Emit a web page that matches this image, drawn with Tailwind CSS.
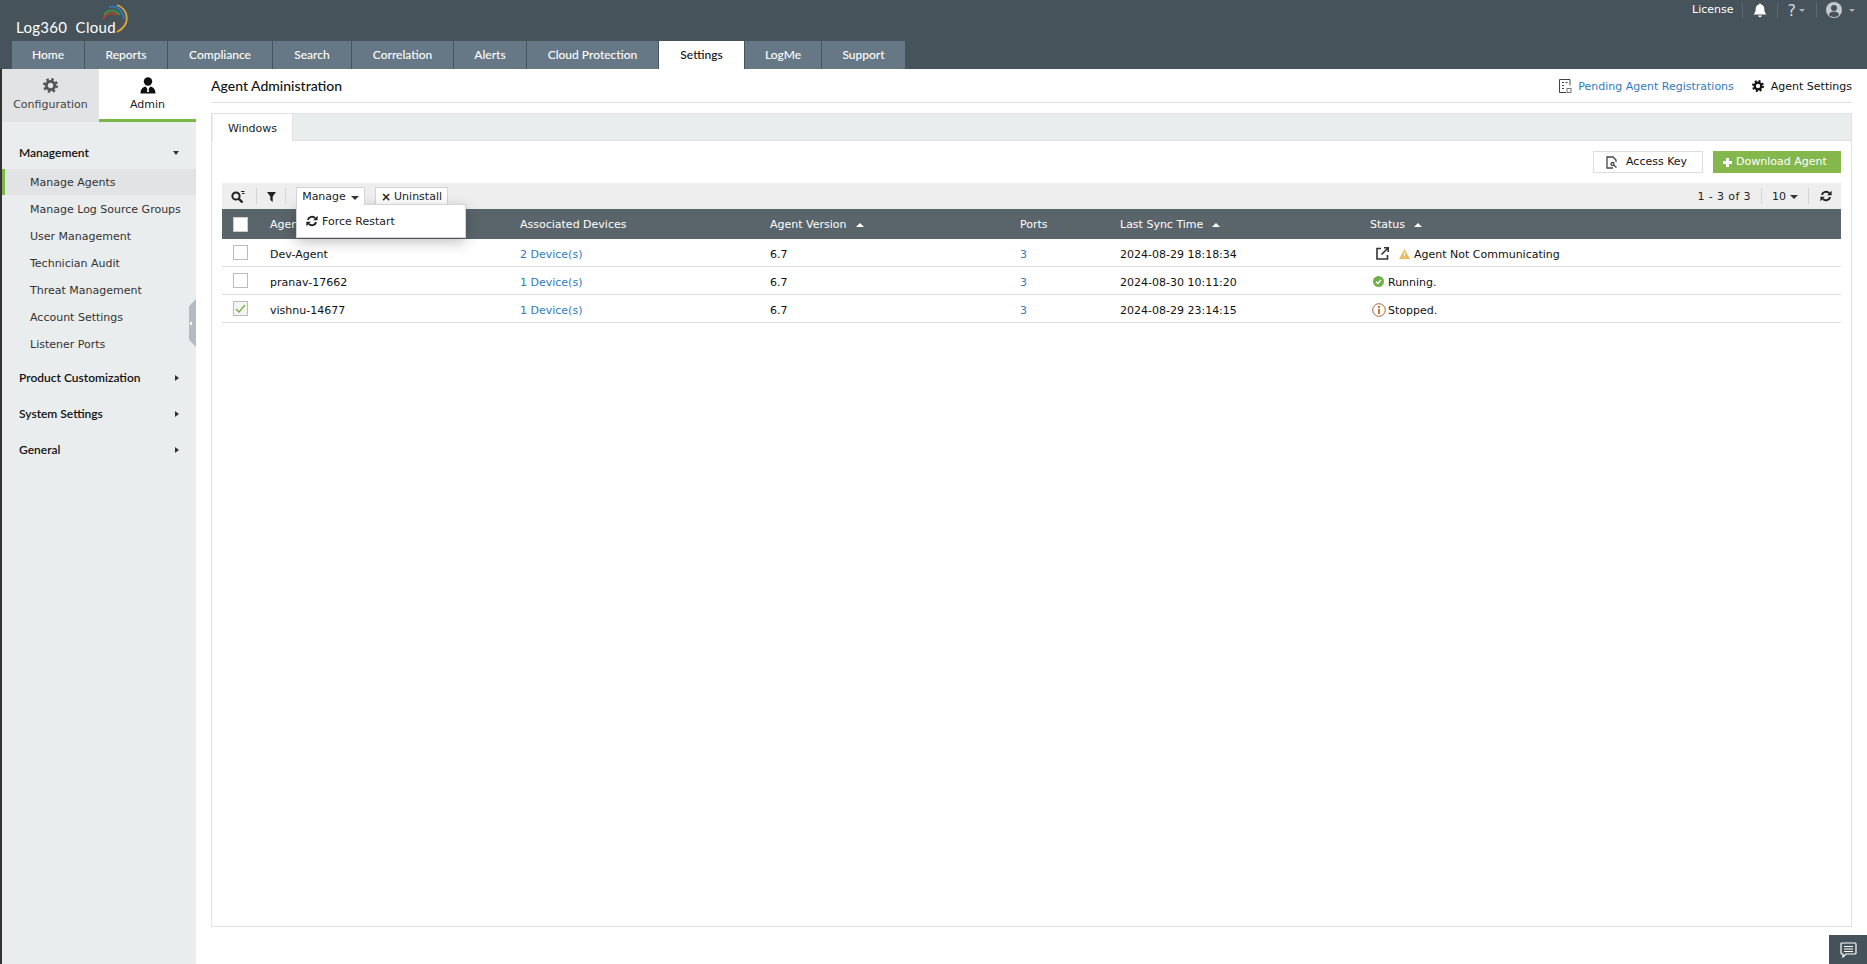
<!DOCTYPE html>
<html lang="en">
<head>
    <meta charset="UTF-8">
    <meta name="viewport" content="width=device-width, initial-scale=1.0">
    <title>Agent Administration</title>
    <script src="https://cdn.jsdelivr.net/npm/@tailwindcss/browser@4"></script>
</head>
<body class="h-[964px] w-[1867px] overflow-hidden bg-white text-[11px] text-[#222] [font-family:'DejaVu_Sans',sans-serif]">
    <svg class="hidden">
        <symbol id="gear" viewBox="0 0 16 16">
            <circle cx="8" cy="8" r="4.4" fill="none" stroke="currentColor" stroke-width="3"/>
            <circle cx="8" cy="8" r="6.6" fill="none" stroke="currentColor" stroke-width="2.8" stroke-dasharray="2.6 2.58"/>
        </symbol>
        <symbol id="refresh" viewBox="0 0 16 16">
            <path d="M2.5 6.5A5.8 5.8 0 0 1 12.3 4.2" fill="none" stroke="currentColor" stroke-width="2.6"/>
            <path d="M9.500 7h6V1z" fill="currentColor"/>
            <path d="M13.5 9.5A5.8 5.8 0 0 1 3.7 11.8" fill="none" stroke="currentColor" stroke-width="2.6"/>
            <path d="M6.500 9H.5v6z" fill="currentColor"/>
        </symbol>
    </svg>

    <!-- top bar -->
    <header class="relative h-[69px] bg-[#47535a] pl-3 pt-[41px]">
        <div class="absolute left-[16px] top-[16px] text-[15px] leading-[22px] tracking-[0.3px] text-white [font-family:Lato,sans-serif]">Log360 &nbsp;Cloud</div>
        <svg class="absolute left-[100px] top-[4px]" width="30" height="30" viewBox="0 0 30 30" fill="none">
            <path d="M3 15C6 9 12 8 17 11" stroke="#a8432f" stroke-width="2"/>
            <path d="M4 11C8 5 15 5 20 11" stroke="#3f8f4f" stroke-width="2"/>
            <path d="M9 3C16 1 23 6 24 15" stroke="#2f78b5" stroke-width="2"/>
            <path d="M17 1C28 5 32 20 17 28" stroke="#e0a63a" stroke-width="1.800"/>
        </svg>
        <div class="absolute right-[12px] top-[1px] flex h-[18px] items-center text-white">
            <span class="pr-[8px] text-[11px]">License</span>
            <span class="h-[15px] w-px bg-[#5d696f]"></span>
            <svg class="mx-[10px]" width="14" height="15" viewBox="0 0 14 15" fill="#fff"><path d="M7 0.5c.7 0 1 .5 1 1 2.200.5 3.300 2.300 3.300 4.500 0 3 1 4 2.200 5.500H.5C1.700 10 2.700 9 2.700 6c0-2.200 1.100-4 3.300-4.500 0-.5.300-1 1-1zM5.300 12.500h3.400a1.700 1.700 0 0 1-3.400 0z"/></svg>
            <span class="h-[15px] w-px bg-[#5d696f]"></span>
            <span class="ml-[10px] text-[16px] leading-[15px] text-[#d5d9db]">?</span>
            <span class="ml-[3px] mr-[11px] mt-[1px] h-0 w-0 border-x-[3.500px] border-t-[3.500px] border-x-transparent border-t-[#aab2b6]"></span>
            <span class="h-[15px] w-px bg-[#5d696f]"></span>
            <svg class="ml-[9px]" width="16" height="16" viewBox="0 0 16 16"><circle cx="8" cy="8" r="8" fill="#c4c9cc"/><circle cx="8" cy="6" r="3" fill="#47535a"/><path d="M2.800 13c.8-2.600 2.800-3.500 5.200-3.500s4.400.9 5.200 3.500A7 7 0 0 1 8 15a7 7 0 0 1-5.200-2z" fill="#47535a"/></svg>
            <span class="ml-[7px] mt-[1px] h-0 w-0 border-x-[3.500px] border-t-[3.500px] border-x-transparent border-t-[#aab2b6]"></span>
        </div>
        <nav class="flex h-[28px] gap-px text-[12px] leading-[28px] text-white [font-family:Lato,sans-serif] font-medium">
            <a class="w-[72px] bg-[#667885] text-center">Home</a>
            <a class="w-[82px] bg-[#667885] text-center">Reports</a>
            <a class="w-[104px] bg-[#667885] text-center">Compliance</a>
            <a class="w-[78px] bg-[#667885] text-center">Search</a>
            <a class="w-[101px] bg-[#667885] text-center">Correlation</a>
            <a class="w-[72px] bg-[#667885] text-center">Alerts</a>
            <a class="w-[131px] bg-[#667885] text-center">Cloud Protection</a>
            <a class="w-[85px] bg-white text-center text-[#111]">Settings</a>
            <a class="w-[76px] bg-[#667885] text-center">LogMe</a>
            <a class="w-[83px] bg-[#667885] text-center">Support</a>
        </nav>
    </header>

    <div class="flex h-[895px]">
        <!-- sidebar -->
        <aside class="relative ml-[2px] w-[194px] shrink-0 bg-[#eaeded] [box-shadow:-2px_0_0_#333]">
            <div class="flex h-[53px] bg-white">
                <div class="flex w-[97px] flex-col items-center bg-[#e1e3e4] pt-[9px] text-[#444]">
                    <svg class="h-[15px] w-[15px] text-[#555]"><use href="#gear"/></svg>
                    <span class="mt-[4px]">Configuration</span>
                </div>
                <div class="flex w-[97px] flex-col items-center border-b-[3px] border-[#7ab648] pt-[8px] text-[#222]">
                    <svg width="16" height="17" viewBox="0 0 16 17" fill="#111"><circle cx="8" cy="4.500" r="4.200"/><path d="M0.500 16.500c0-4.500 2.500-6.500 5-7l2.500 3 2.500-3c2.500.5 5 2.500 5 7z"/><path d="M7.400 11h1.200l.4 4H7z" fill="#fff"/></svg>
                    <span class="mt-[3px]">Admin</span>
                </div>
            </div>
            <div class="flex h-[47px] items-center justify-between px-[17px] pt-[15px] text-[12px] font-semibold text-[#111] [font-family:Lato,sans-serif]">
                <span>Management</span>
                <span class="h-0 w-0 border-x-[3.500px] border-t-[4px] border-x-transparent border-t-[#333]"></span>
            </div>
            <ul class="text-[#333]">
                <li class="flex h-[26px] items-center border-l-[3px] border-[#7ab648] bg-[#e1e3e4] pl-[25px] pt-[2px]">Manage Agents</li>
                <li class="flex h-[27px] items-center pl-[28px] pt-[3px]">Manage Log Source Groups</li>
                <li class="flex h-[27px] items-center pl-[28px] pt-[3px]">User Management</li>
                <li class="flex h-[27px] items-center pl-[28px] pt-[3px]">Technician Audit</li>
                <li class="flex h-[27px] items-center pl-[28px] pt-[3px]">Threat Management</li>
                <li class="flex h-[27px] items-center pl-[28px] pt-[3px]">Account Settings</li>
                <li class="flex h-[27px] items-center pl-[28px] pt-[3px]">Listener Ports</li>
            </ul>
            <div class="mt-[3px] text-[12px] font-semibold text-[#111] [font-family:Lato,sans-serif]">
                <div class="flex h-[36px] items-center justify-between px-[17px]"><span>Product Customization</span><span class="h-0 w-0 border-y-[3.500px] border-l-[4px] border-y-transparent border-l-[#333]"></span></div>
                <div class="flex h-[36px] items-center justify-between px-[17px]"><span>System Settings</span><span class="h-0 w-0 border-y-[3.500px] border-l-[4px] border-y-transparent border-l-[#333]"></span></div>
                <div class="flex h-[36px] items-center justify-between px-[17px]"><span>General</span><span class="h-0 w-0 border-y-[3.500px] border-l-[4px] border-y-transparent border-l-[#333]"></span></div>
            </div>
            <div class="absolute right-0 top-[230px] flex h-[48px] w-[7px] items-center bg-[#b5bcbf] [clip-path:polygon(100%_0,100%_100%,0_85%,0_15%)]">
                <span class="ml-[1px] h-[3px] w-[2px] bg-white"></span>
            </div>
        </aside>

        <!-- main -->
        <main class="min-w-0 flex-1 px-[15px]">
            <div class="flex h-[34px] items-center justify-between border-b border-[#e0e0e0]">
                <h1 class="text-[14px] font-medium text-[#111] [font-family:Lato,sans-serif]">Agent Administration</h1>
                <div class="flex items-center pt-[1px]">
                    <svg width="13" height="14" viewBox="0 0 13 14" fill="none" stroke="#444"><path d="M7 13.500H.5V.5H11V6.500"/><path d="M3 3.500h2M6.500 3.500h2M3 6.500h2M3 9.500h2"/><rect x="8" y="9.500" width="4" height="4" stroke="#777"/></svg>
                    <span class="ml-[6px] pt-[2px] text-[#2f7bbf]">Pending Agent Registrations</span>
                    <svg class="ml-[18px] h-[12px] w-[12px] text-[#111]"><use href="#gear"/></svg>
                    <span class="ml-[7px] pt-[2px] text-[#111]">Agent Settings</span>
                </div>
            </div>

            <section class="mt-[10px] h-[814px] border border-[#dfe1e2]">
                <div class="h-[27px] border-b border-[#dfe1e2] bg-[#eaeded]">
                    <div class="ml-px h-[27px] w-[80px] border-r border-[#dfe1e2] bg-white pt-[1px] text-center leading-[27px]">Windows</div>
                </div>
                <div class="px-[10px]">
                    <div class="flex h-[42px] items-start justify-end gap-[10px] pt-[10px]">
                        <button class="flex h-[22px] w-[110px] items-center gap-[8px] border border-[#dcdcdc] pl-[12px] text-[#111]">
                            <svg width="12" height="13" viewBox="0 0 12 13" fill="none" stroke="#444" stroke-width="1.300"><path d="M7 12H1V1h6l3 3v2"/><circle cx="6.500" cy="8" r="1.500"/><path d="M7.500 9l3 2.500"/></svg>
                            <span class="pt-[1px]">Access Key</span>
                        </button>
                        <button class="flex h-[22px] w-[128px] items-center gap-[4px] bg-[#84b84c] pl-[10px] font-medium text-white">
                            <svg width="9" height="9" viewBox="0 0 9 9" fill="#fff"><path d="M3 0h3v3h3v3H6v3H3V6H0V3h3z"/></svg>
                            <span class="pt-[1px]">Download Agent</span>
                        </button>
                    </div>

                    <!-- grid toolbar -->
                    <div class="relative flex h-[26px] items-center bg-[#eeeeee] text-[#222]">
                        <svg class="ml-[9px]" width="14" height="13" viewBox="0 0 14 13" fill="none" stroke="#222"><circle cx="5" cy="6" r="3.600" stroke-width="2"/><path d="M8 9l3.500 3.500" stroke-width="2.400"/><path d="M10 1.500h3.500M11 3.500h2.500" stroke-width="1"/></svg>
                        <span class="ml-[11px] h-[16px] w-px bg-[#d4d4d4]"></span>
                        <svg class="ml-[10px] mt-[2px]" width="9" height="10" viewBox="0 0 9 10" fill="#222"><path d="M0 0h9L5.700 4.500V10L3.300 8V4.500z"/></svg>
                        <span class="ml-[9px] h-[16px] w-px bg-[#d4d4d4]"></span>
                        <button class="relative z-20 ml-[10px] flex h-[18px] w-[69px] items-center justify-center gap-[5px] border border-b-0 border-[#d4d4d4] bg-white pt-[2px]">
                            Manage <span class="h-0 w-0 border-x-[4px] border-t-[4px] border-x-transparent border-t-[#333]"></span>
                        </button>
                        <button class="ml-[10px] flex h-[18px] w-[73px] items-center justify-center gap-[3px] border border-[#d4d4d4] bg-white pt-[2px]">
                            <span class="text-[12px] font-bold leading-none">×</span> Uninstall
                        </button>
                        <div class="ml-auto flex items-center">
                            <span class="pt-[2px] tracking-[0.4px]">1 - 3 of 3</span>
                            <span class="ml-[10px] h-[16px] w-px bg-[#d4d4d4]"></span>
                            <span class="ml-[10px] pt-[2px]">10</span>
                            <span class="ml-[4px] mt-[2px] h-0 w-0 border-x-[4px] border-t-[4px] border-x-transparent border-t-[#333]"></span>
                            <span class="ml-[10px] h-[16px] w-px bg-[#d4d4d4]"></span>
                            <svg class="ml-[11px] mr-[9px] h-[12px] w-[12px] text-[#222]"><use href="#refresh"/></svg>
                        </div>
                        <div class="absolute left-[74px] top-[21px] z-10 flex h-[34px] w-[170px] items-center gap-[4px] border border-[#d4d4d4] bg-white pl-[9px] shadow-[0_4px_14px_rgba(0,0,0,0.25)]">
                            <svg class="h-[12px] w-[12px] text-[#222]"><use href="#refresh"/></svg>
                            <span class="pt-[3px]">Force Restart</span>
                        </div>
                    </div>

                    <!-- grid -->
                    <div class="grid h-[30px] grid-cols-[48px_250px_250px_250px_100px_250px_1fr] items-center bg-[#5a656b] text-white">
                        <span class="ml-[11px] h-[15px] w-[15px] border border-[#ccc] bg-white"></span>
                        <span class="pt-[2px]">Agent Name</span>
                        <span class="pt-[2px]">Associated Devices</span>
                        <span class="flex items-center gap-[9px] pt-[2px]">Agent Version <i class="h-0 w-0 border-x-[4px] border-b-[4px] border-x-transparent border-b-white"></i></span>
                        <span class="pt-[2px]">Ports</span>
                        <span class="flex items-center gap-[9px] pt-[2px]">Last Sync Time <i class="h-0 w-0 border-x-[4px] border-b-[4px] border-x-transparent border-b-white"></i></span>
                        <span class="flex items-center gap-[9px] pt-[2px]">Status <i class="h-0 w-0 border-x-[4px] border-b-[4px] border-x-transparent border-b-white"></i></span>
                    </div>
                    <div class="grid h-[28px] grid-cols-[48px_250px_250px_250px_100px_250px_1fr] items-center border-b border-[#dcdcdc]">
                        <span class="ml-[11px] h-[15px] w-[15px] border border-[#bbb] bg-white"></span>
                        <span class="pt-[5px] text-[#111]">Dev-Agent</span>
                        <span class="pt-[5px] text-[#2f7bbf]">2 Device(s)</span>
                        <span class="pt-[5px] text-[#111]">6.7</span>
                        <span class="pt-[5px] text-[#2f7bbf]">3</span>
                        <span class="pt-[5px] text-[#111]">2024-08-29 18:18:34</span>
                        <span class="flex items-center pt-[2px] text-[#111]">
                            <svg class="ml-[6px]" width="13" height="13" viewBox="0 0 13 13" fill="none" stroke="#333" stroke-width="1.600"><path d="M5 1.500H1v10.500h10.500V8"/><path d="M5.500 7.500L12 1M8 .8h4.200V5"/></svg>
                            <svg class="ml-[10px]" width="11" height="10" viewBox="0 0 11 10"><path d="M5.500 0L11 10H0z" fill="#f0b95a"/><path d="M5 3.500h1V7H5zM5 7.800h1v1H5z" fill="#fff"/></svg>
                            <span class="ml-[4px] pt-[3px]">Agent Not Communicating</span>
                        </span>
                    </div>
                    <div class="grid h-[28px] grid-cols-[48px_250px_250px_250px_100px_250px_1fr] items-center border-b border-[#dcdcdc]">
                        <span class="ml-[11px] h-[15px] w-[15px] border border-[#bbb] bg-white"></span>
                        <span class="pt-[5px] text-[#111]">pranav-17662</span>
                        <span class="pt-[5px] text-[#2f7bbf]">1 Device(s)</span>
                        <span class="pt-[5px] text-[#111]">6.7</span>
                        <span class="pt-[5px] text-[#2f7bbf]">3</span>
                        <span class="pt-[5px] text-[#111]">2024-08-30 10:11:20</span>
                        <span class="flex items-center pt-[2px] text-[#111]">
                            <svg class="ml-[3px]" width="11" height="11" viewBox="0 0 11 11"><circle cx="5.500" cy="5.500" r="5.500" fill="#70b04a"/><path d="M3 5.700l1.800 1.800L8 4" fill="none" stroke="#fff" stroke-width="1.400"/></svg>
                            <span class="ml-[4px] pt-[3px]">Running.</span>
                        </span>
                    </div>
                    <div class="grid h-[28px] grid-cols-[48px_250px_250px_250px_100px_250px_1fr] items-center border-b border-[#dcdcdc]">
                        <span class="ml-[11px] flex h-[15px] w-[15px] items-center justify-center border border-[#bbb] bg-[#f4f4f4]">
                            <svg width="11" height="9" viewBox="0 0 11 9" fill="none" stroke="#7ab648" stroke-width="1.500"><path d="M1 5l3 3 6-7"/></svg>
                        </span>
                        <span class="pt-[5px] text-[#111]">vishnu-14677</span>
                        <span class="pt-[5px] text-[#2f7bbf]">1 Device(s)</span>
                        <span class="pt-[5px] text-[#111]">6.7</span>
                        <span class="pt-[5px] text-[#2f7bbf]">3</span>
                        <span class="pt-[5px] text-[#111]">2024-08-29 23:14:15</span>
                        <span class="flex items-center pt-[2px] text-[#111]">
                            <svg class="ml-[2px]" width="14" height="14" viewBox="0 0 14 14"><circle cx="7" cy="7" r="6.300" fill="none" stroke="#b5623c"/><path d="M6 3h2v2H6zM6 6h2v5H6z" fill="#c77a2e"/></svg>
                            <span class="ml-[2px] pt-[3px]">Stopped.</span>
                        </span>
                    </div>
                </div>
            </section>
        </main>
    </div>

    <button class="absolute bottom-0 right-0 flex h-[29px] w-[38px] items-center justify-center bg-[#46525a]">
        <svg width="17" height="16" viewBox="0 0 17 16" fill="none" stroke="#fff" stroke-width="1.200"><path d="M2 1h13a1 1 0 0 1 1 1v9a1 1 0 0 1-1 1H6l-3 3v-3H2a1 1 0 0 1-1-1V2a1 1 0 0 1 1-1z"/><path d="M4 4.500h9M4 7h9M4 9.500h9"/></svg>
    </button>
</body>
</html>
